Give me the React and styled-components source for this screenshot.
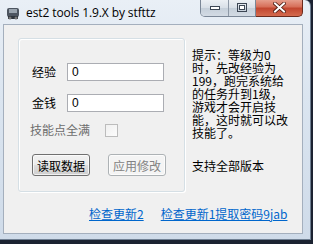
import styled, { createGlobalStyle } from 'styled-components';

const Global = createGlobalStyle`
  html, body { margin: 0; padding: 0; background: #1b2231; }
  body { width: 313px; height: 244px; overflow: hidden; }
`;

const Frame = styled.div`
  width: 311px;
  height: 240px;
  box-sizing: border-box;
  background: linear-gradient(to bottom, #e9eff6 0%, #dbe5f0 40%, #cfdbe9 100%);
  border: 1px solid #6f7f92;
  border-left: none;
  border-top: none;
  border-radius: 0 6px 0 0;
  display: flex;
  flex-direction: column;
  padding: 0 7px 5px 3px;
`;

const TitleBar = styled.div`
  height: 24px;
  display: flex;
  align-items: flex-start;
  position: relative;
`;

const AppIcon = styled.div`
  width: 16px;
  height: 16px;
  margin: 5px 5px 0 2px;
`;

const Title = styled.div`
  font-family: "Open Sans", "Noto Sans", sans-serif;
  font-size: 12px;
  color: #000;
  margin-top: 4px;
  letter-spacing: -0.1px;
`;

const Controls = styled.div`
  position: absolute;
  right: 0;
  top: -1px;
  display: flex;
`;

const CtrlGroup = styled.div`
  display: flex;
  border: 1px solid #7b8797;
  border-top: none;
  border-radius: 0 0 0 5px;
  overflow: hidden;
`;

const CtrlBtn = styled.div`
  width: ${p => p.$w}px;
  height: 17px;
  display: flex;
  align-items: center;
  justify-content: center;
  background: linear-gradient(to bottom, #eef2f6 0%, #d9e0e8 50%, #c4ced9 51%, #d3dbe4 100%);
  border-left: ${p => (p.$first ? 'none' : '1px solid #8d98a6')};
`;

const CloseBtn = styled.div`
  width: 46px;
  height: 17px;
  display: flex;
  align-items: center;
  justify-content: center;
  background: linear-gradient(to bottom, #e8a594 0%, #d7705a 45%, #c24730 55%, #d46a4e 100%);
  border: 1px solid #6b2a1c;
  border-top: none;
  border-left: none;
  border-radius: 0 0 5px 0;
`;

const Client = styled.div`
  flex: 1;
  background: #f0f0f0;
  border: 1px solid #a4afbd;
  display: flex;
  flex-direction: column;
  padding: 13px 14px 0 14px;
  font-family: "Noto Sans CJK SC", "Noto Sans", sans-serif;
  font-size: 12px;
  color: #000;
`;

const Body = styled.div`
  display: flex;
  gap: 7px;
`;

const GroupBox = styled.div`
  width: 167px;
  height: 154px;
  box-sizing: border-box;
  border: 1px solid #d5dfe5;
  border-radius: 3px;
  box-shadow: inset 1px 1px 0 #fff, 1px 1px 0 #fff;
  padding: 23px 0 0 13px;
  display: flex;
  flex-direction: column;
`;

const FieldRow = styled.div`
  display: flex;
  align-items: center;
  height: 20px;
  margin-bottom: 11px;
`;

const Label = styled.span`
  width: ${p => (p.$auto ? 'auto' : '35px')};
  color: ${p => (p.$disabled ? '#6d6d6d' : '#000')};
  line-height: 14px;
`;

const Input = styled.div`
  width: 97px;
  height: 18px;
  box-sizing: border-box;
  background: #fff;
  border: 1px solid #abadb3;
  padding-left: 4px;
  font-family: "Liberation Sans", Arial, sans-serif;
  font-size: 12px;
  line-height: 17px;
`;

const CheckRow = styled.div`
  display: flex;
  align-items: center;
  height: 14px;
  margin: -1px 0 0 -2px;
`;

const Check = styled.div`
  width: 11px;
  height: 11px;
  border: 1px solid #bcbcbc;
  background: linear-gradient(135deg, #f0f0f0, #fcfcfc);
  margin-left: 15px;
`;

const Buttons = styled.div`
  display: flex;
  gap: 18px;
  margin: 17px 0 0 0;
`;

const Button = styled.div`
  width: 58px;
  height: 22px;
  box-sizing: border-box;
  border: 1px solid ${p => (p.$disabled ? '#adb2b5' : '#707070')};
  border-radius: 3px;
  background: ${p =>
    p.$disabled
      ? '#f4f4f4'
      : 'linear-gradient(to bottom, #f2f2f2 0%, #ebebeb 50%, #dddddd 51%, #cfcfcf 100%)'};
  color: ${p => (p.$disabled ? '#838383' : '#000')};
  display: flex;
  align-items: center;
  justify-content: center;
  font-size: 12px;
  box-shadow: inset 0 0 0 1px rgba(255, 255, 255, 0.7);
`;

const Tip = styled.div`
  padding-top: 10px;
  white-space: nowrap;
`;

const TipLine = styled.div`
  height: 13px;
  line-height: 13px;
`;

const Support = styled.div`
  margin-top: 20px;
  line-height: 13px;
`;

const Links = styled.div`
  display: flex;
  gap: 17px;
  margin: 13px 0 0 71px;
`;

const Link = styled.a`
  color: #0066cc;
  text-decoration: underline;
  font-size: 12px;
  cursor: pointer;
`;

const tipLines = [
  '提示：等级为0',
  '时，先改经验为',
  '199，跑完系统给',
  '的任务升到1级，',
  '游戏才会开启技',
  '能，这时就可以改',
  '技能了。',
];

const IconSvg = () => (
  <svg width="16" height="16" viewBox="0 0 16 16">
    <rect x="2" y="3" width="12" height="9" rx="2" fill="#4d5560" />
    <rect x="4" y="4" width="8" height="4" fill="#9aa4ae" />
    <rect x="3" y="11" width="10" height="3" fill="#2f353c" />
    <circle cx="5" cy="13" r="1.5" fill="#777" />
    <circle cx="11" cy="13" r="1.5" fill="#777" />
  </svg>
);

export default function App() {
  return (
    <>
      <Global />
      <Frame>
        <TitleBar>
          <AppIcon><IconSvg /></AppIcon>
          <Title>est2 tools 1.9.X by stfttz</Title>
          <Controls>
            <CtrlGroup>
              <CtrlBtn $w={27} $first>
                <svg width="10" height="4"><rect x="0.5" y="0.5" width="9" height="3" fill="#fff" stroke="#3c4654" /></svg>
              </CtrlBtn>
              <CtrlBtn $w={26}>
                <svg width="10" height="9"><rect x="0.5" y="0.5" width="9" height="8" fill="none" stroke="#3c4654" /><rect x="2.5" y="2.5" width="5" height="4" fill="#fff" stroke="#3c4654" /></svg>
              </CtrlBtn>
            </CtrlGroup>
            <CloseBtn>
              <svg width="13" height="11" viewBox="0 0 13 11">
                <path d="M2 1.5 L11 9.5 M11 1.5 L2 9.5" stroke="#4a1a10" strokeWidth="3.6" strokeLinecap="square" />
                <path d="M2 1.5 L11 9.5 M11 1.5 L2 9.5" stroke="#fff" strokeWidth="2" strokeLinecap="square" />
              </svg>
            </CloseBtn>
          </Controls>
        </TitleBar>
        <Client>
          <Body>
            <GroupBox>
              <FieldRow>
                <Label>经验</Label>
                <Input>0</Input>
              </FieldRow>
              <FieldRow>
                <Label>金钱</Label>
                <Input>0</Input>
              </FieldRow>
              <CheckRow>
                <Label $disabled $auto>技能点全满</Label>
                <Check />
              </CheckRow>
              <Buttons>
                <Button>读取数据</Button>
                <Button $disabled>应用修改</Button>
              </Buttons>
            </GroupBox>
            <div>
              <Tip>
                {tipLines.map(line => (
                  <TipLine key={line}>{line}</TipLine>
                ))}
              </Tip>
              <Support>支持全部版本</Support>
            </div>
          </Body>
          <Links>
            <Link>检查更新2</Link>
            <Link>检查更新1提取密码9jab</Link>
          </Links>
        </Client>
      </Frame>
    </>
  );
}
